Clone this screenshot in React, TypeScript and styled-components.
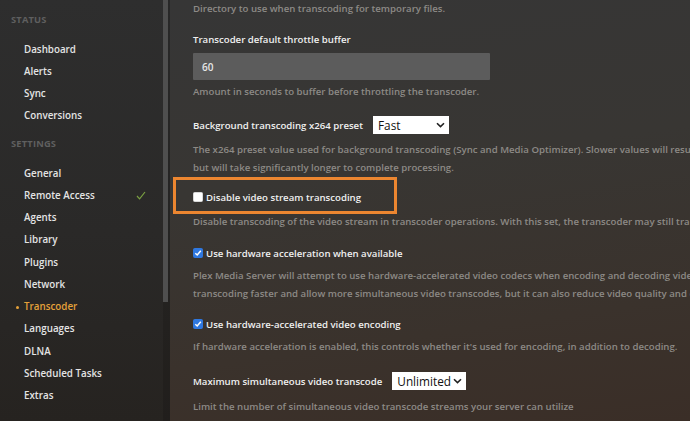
import React from "react";
import styled, { createGlobalStyle } from "styled-components";

const GlobalStyle = createGlobalStyle`
  html, body {
    margin: 0;
    padding: 0;
    background: #2b2b2b;
  }
  body {
    font-family: "Open Sans", "Liberation Sans", sans-serif;
    -webkit-font-smoothing: antialiased;
  }
`;

const PageDiv = styled.div`
  display: flex;
  flex-direction: row;
  width: 690px;
  height: 421px;
  overflow: hidden;
`;

const SidebarDiv = styled.div`
  display: flex;
  flex-direction: row;
  width: 170px;
  flex-shrink: 0;
  background: linear-gradient(180deg, #2e2e2e 0%, #2a2928 55%, #262320 100%);
`;

const NavList = styled.nav`
  flex: 1;
  padding-top: 3px;
`;

const ScrollTrack = styled.div`
  width: 7px;
  background: rgba(0, 0, 0, 0.12);
`;

const ScrollThumb = styled.div`
  width: 5px;
  height: 302px;
  background: #4f4f4f;
`;

const SectionHeader = styled.div`
  padding: 10px 0 11px 11px;
  height: 14px;
  line-height: 14px;
  font-size: 9.3px;
  font-weight: 700;
  letter-spacing: 0.2px;
  color: #5f5f5f;
  text-transform: uppercase;
`;

const NavItem = styled.div<{ $active?: boolean }>`
  display: flex;
  align-items: center;
  height: 22.25px;
  padding-left: 24px;
  padding-right: 17px;
  font-size: 9.8px;
  font-weight: 600;
  color: ${(p) => (p.$active ? "#e5a13a" : "#e4e4e4")};
  position: relative;
`;

const NavLabel = styled.span`
  flex: 1;
`;

const ActiveDot = styled.span`
  position: absolute;
  left: 16px;
  top: 10px;
  width: 3px;
  height: 3px;
  border-radius: 50%;
  background: #e5a13a;
`;

const MainDiv = styled.main`
  flex: 1;
  padding-left: 23px;
  overflow: hidden;
  background: linear-gradient(172deg, #363636 0%, #383633 40%, #3a322c 75%, #3a2e27 100%);
  font-size: 9.65px;
  font-weight: 600;
`;

const Setting = styled.div<{ $gap?: number }>`
  margin-top: ${(p) => p.$gap ?? 15}px;
`;

const Label = styled.div`
  height: 16px;
  line-height: 16px;
  color: #f0f0f0;
  white-space: nowrap;
`;

const LabelRow = styled.div`
  display: flex;
  align-items: center;
  gap: 10px;
  height: 18px;
  color: #f0f0f0;
  white-space: nowrap;
`;

const Description = styled.div<{ $gap?: number }>`
  margin-top: ${(p) => p.$gap ?? 7}px;
  line-height: 18px;
  color: #8d8a86;
  white-space: nowrap;
`;

const TextInput = styled.div`
  margin-top: 5px;
  width: 297px;
  height: 27px;
  box-sizing: border-box;
  padding-left: 9px;
  display: flex;
  align-items: center;
  background: #5c5c5c;
  border-radius: 1px;
  color: #e6e6e6;
  font-size: 10px;
`;

const SelectBox = styled.div<{ $width: number }>`
  width: ${(p) => p.$width}px;
  height: 18px;
  box-sizing: border-box;
  display: flex;
  align-items: center;
  justify-content: space-between;
  padding: 0 4px 0 5px;
  background: #ffffff;
  color: #111111;
  font-size: 11.8px;
  font-weight: 400;
`;

const CheckRow = styled.label`
  display: flex;
  align-items: center;
  gap: 3px;
  height: 16px;
  color: #f0f0f0;
  white-space: nowrap;
`;

const Box = styled.span<{ $checked?: boolean }>`
  width: 10px;
  height: 10px;
  box-sizing: border-box;
  border-radius: 1.5px;
  display: inline-flex;
  align-items: center;
  justify-content: center;
  background: ${(p) => (p.$checked ? "#2f78e0" : "#ffffff")};
  border: 1px solid ${(p) => (p.$checked ? "#2f78e0" : "#d8d8d8")};
`;

const Highlight = styled.div`
  margin-left: -20px;
  width: 224px;
  height: 37px;
  box-sizing: border-box;
  border: 3px solid #ec8630;
  padding: 3px 0 0 17px;
  display: flex;
  align-items: center;
`;

function Chevron() {
  return (
    <svg width="9" height="6" viewBox="0 0 9 6">
      <path d="M1 1.2 L4.5 4.6 L8 1.2" fill="none" stroke="#222" strokeWidth="1.6" />
    </svg>
  );
}

function Checkbox({ checked, label }: { checked?: boolean; label: string }) {
  return (
    <CheckRow>
      <Box $checked={checked}>
        {checked && (
          <svg width="8" height="8" viewBox="0 0 8 8">
            <path d="M1.3 4.2 L3.2 6 L6.8 1.8" fill="none" stroke="#fff" strokeWidth="1.5" />
          </svg>
        )}
      </Box>
      {label}
    </CheckRow>
  );
}

const statusItems = ["Dashboard", "Alerts", "Sync", "Conversions"];
const settingsItems = [
  "General",
  "Remote Access",
  "Agents",
  "Library",
  "Plugins",
  "Network",
  "Transcoder",
  "Languages",
  "DLNA",
  "Scheduled Tasks",
  "Extras",
];

export default function App() {
  return (
    <>
      <GlobalStyle />
      <PageDiv>
        <SidebarDiv>
          <NavList>
            <SectionHeader>Status</SectionHeader>
            {statusItems.map((item) => (
              <NavItem key={item}>
                <NavLabel>{item}</NavLabel>
              </NavItem>
            ))}
            <SectionHeader>Settings</SectionHeader>
            {settingsItems.map((item) => (
              <NavItem key={item} $active={item === "Transcoder"}>
                {item === "Transcoder" && <ActiveDot />}
                <NavLabel>{item}</NavLabel>
                {item === "Remote Access" && (
                  <svg width="10" height="9" viewBox="0 0 10 9">
                    <path d="M1 5 L3.6 7.8 L9 1" fill="none" stroke="#7aa042" strokeWidth="1.2" />
                  </svg>
                )}
              </NavItem>
            ))}
            <SectionHeader>Manage</SectionHeader>
          </NavList>
          <ScrollTrack>
            <ScrollThumb />
          </ScrollTrack>
        </SidebarDiv>

        <MainDiv>
          <Description $gap={0}>Directory to use when transcoding for temporary files.</Description>

          <Setting $gap={14}>
            <Label>Transcoder default throttle buffer</Label>
            <TextInput>60</TextInput>
            <Description $gap={3}>
              Amount in seconds to buffer before throttling the transcoder.
            </Description>
          </Setting>

          <Setting>
            <LabelRow>
              Background transcoding x264 preset
              <SelectBox $width={76}>
                Fast
                <Chevron />
              </SelectBox>
            </LabelRow>
            <Description>
              The x264 preset value used for background transcoding (Sync and Media Optimizer). Slower values will result in better video quality and smaller file sizes,
              <br />
              but will take significantly longer to complete processing.
            </Description>
          </Setting>

          <Setting $gap={0}>
            <Highlight>
              <Checkbox label="Disable video stream transcoding" />
            </Highlight>
            <Description $gap={-1}>
              Disable transcoding of the video stream in transcoder operations. With this set, the transcoder may still transcode audio and subtitles.
            </Description>
          </Setting>

          <Setting $gap={14}>
            <Checkbox checked label="Use hardware acceleration when available" />
            <Description $gap={6}>
              Plex Media Server will attempt to use hardware-accelerated video codecs when encoding and decoding video. Hardware acceleration can make
              <br />
              transcoding faster and allow more simultaneous video transcodes, but it can also reduce video quality and compatibility.
            </Description>
          </Setting>

          <Setting $gap={13}>
            <Checkbox checked label="Use hardware-accelerated video encoding" />
            <Description $gap={6}>
              If hardware acceleration is enabled, this controls whether it's used for encoding, in addition to decoding.
            </Description>
          </Setting>

          <Setting $gap={16}>
            <LabelRow>
              Maximum simultaneous video transcode
              <SelectBox $width={74}>
                Unlimited
                <Chevron />
              </SelectBox>
            </LabelRow>
            <Description $gap={8}>
              Limit the number of simultaneous video transcode streams your server can utilize
            </Description>
          </Setting>
        </MainDiv>
      </PageDiv>
    </>
  );
}
